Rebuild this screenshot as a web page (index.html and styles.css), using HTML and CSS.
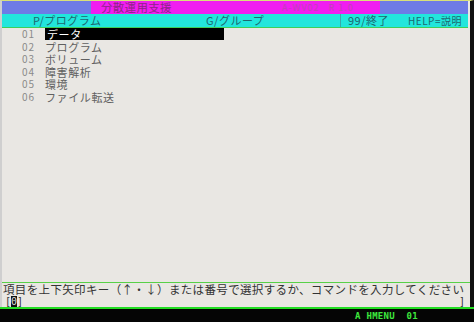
FILE: index.html
```html
<!DOCTYPE html>
<html lang="ja">
<head>
<meta charset="utf-8">
<link rel="stylesheet" href="styles.css">
</head>
<body>
<div class="screen">
  <div class="main">
    <div class="titlebar">
      <div class="tb-blue tb-left"></div>
      <div class="tb-mag">
        <span class="tb-title">分散運用支援</span>
        <span class="tb-ver">A-WV02&nbsp;&nbsp;&nbsp;R 1.0</span>
      </div>
      <div class="tb-blue tb-right"></div>
    </div>
    <div class="fnbar">
      <span class="fn fn-p">P/プログラム</span>
      <span class="fn fn-g">G/グループ</span>
      <span class="fn-sep"></span>
      <span class="fn fn-e">99/終了</span>
      <span class="fn fn-h">HELP=説明</span>
    </div>
    <div class="content">
      <div class="row"><span class="num">01</span><span class="item sel">データ</span></div>
      <div class="row"><span class="num">02</span><span class="item">プログラム</span></div>
      <div class="row"><span class="num">03</span><span class="item">ボリューム</span></div>
      <div class="row"><span class="num">04</span><span class="item">障害解析</span></div>
      <div class="row"><span class="num">05</span><span class="item">環境</span></div>
      <div class="row"><span class="num">06</span><span class="item">ファイル転送</span></div>
    </div>
    <div class="msg">項目を上下矢印キー（↑・↓）または番号で選択するか、コマンドを入力してください</div>
    <div class="input"><span>[<span class="cur">0</span>]</span><span>]</span></div>
  </div>
  <div class="status"><span class="st-text">A HMENU&nbsp;&nbsp;01</span></div>
</div>
</body>
</html>
```

FILE: styles.css
```css
html, body {
  margin: 0;
  padding: 0;
  background: #e9e7e3;
}
.screen {
  width: 474px;
  height: 322px;
  display: flex;
  flex-direction: column;
  font-family: "Noto Sans CJK JP", "DejaVu Sans Mono", monospace;
  font-size: 11px;
  white-space: nowrap;
  overflow: hidden;
}
.main {
  flex: 1;
  min-height: 0;
  display: flex;
  flex-direction: column;
  border-left: 2px solid #cfcfcf;
  border-right: 4px solid #111;
  border-top: 1px solid #d8e07a;
}
.titlebar {
  display: flex;
  flex: none;
  height: 13px;
  margin-right: 2px;
}
.tb-blue {
  background: #6e7be6;
}
.tb-left {
  width: 89px;
}
.tb-right {
  flex: 1;
}
.tb-mag {
  width: 289px;
  background: #f01ef0;
  display: flex;
  align-items: center;
  line-height: 13px;
  color: #8e2488;
}
.tb-title {
  margin-left: 10px;
  font-size: 11.5px;
  letter-spacing: 0.3px;
  width: 181px;
}
.tb-ver {
  font-size: 9px;
  color: #c040b8;
  letter-spacing: 1px;
}
.fnbar {
  flex: none;
  height: 13px;
  background: #22e6dc;
  border-bottom: 1px solid #3ccf5a;
  margin-right: 2px;
  display: flex;
  align-items: center;
  color: #1e6870;
  line-height: 13px;
}
.fn {
  flex: none;
  letter-spacing: 0.5px;
}
.fn-p {
  margin-left: 31px;
  width: 173px;
}
.fn-g {
  width: 134px;
}
.fn-sep {
  flex: none;
  width: 1px;
  height: 13px;
  background: #3aa8a8;
}
.fn-e {
  margin-left: 7px;
  width: 60px;
}
.fn-h {
  font-size: 10px;
}
.content {
  flex: 1;
  min-height: 0;
  color: #666;
}
.row {
  display: flex;
  height: 12.6px;
  line-height: 12.6px;
  align-items: center;
}
.num {
  flex: none;
  width: 43px;
  padding-left: 20px;
  box-sizing: border-box;
  color: #8a8a8a;
  font-size: 10px;
  letter-spacing: 1px;
}
.item {
  letter-spacing: 0.6px;
  color: #606060;
}
.sel {
  background: #000;
  color: #fff;
  width: 177px;
  padding-left: 2px;
  height: 12px;
  line-height: 12px;
}
.msg {
  flex: none;
  height: 13px;
  border-top: 1px solid #58d048;
  color: #333;
  font-size: 11.5px;
  letter-spacing: 0.35px;
  line-height: 13px;
  padding-left: 1px;
  overflow: hidden;
}
.input {
  flex: none;
  display: flex;
  justify-content: space-between;
  align-items: center;
  color: #333;
  font-family: "DejaVu Sans Mono", monospace;
  line-height: 11px;
  height: 11px;
  font-size: 10px;
  padding: 0 5px 0 3px;
}
.cur {
  background: #111;
  color: #ddd;
}
.status {
  flex: none;
  height: 13px;
  background: #050505;
  border-top: 2px solid #22dd22;
  display: flex;
  align-items: center;
  color: #3ee83e;
  font-family: "DejaVu Sans Mono", monospace;
  font-size: 9px;
  font-weight: bold;
}
.st-text {
  margin-left: 355px;
  letter-spacing: 0.3px;
}
```
